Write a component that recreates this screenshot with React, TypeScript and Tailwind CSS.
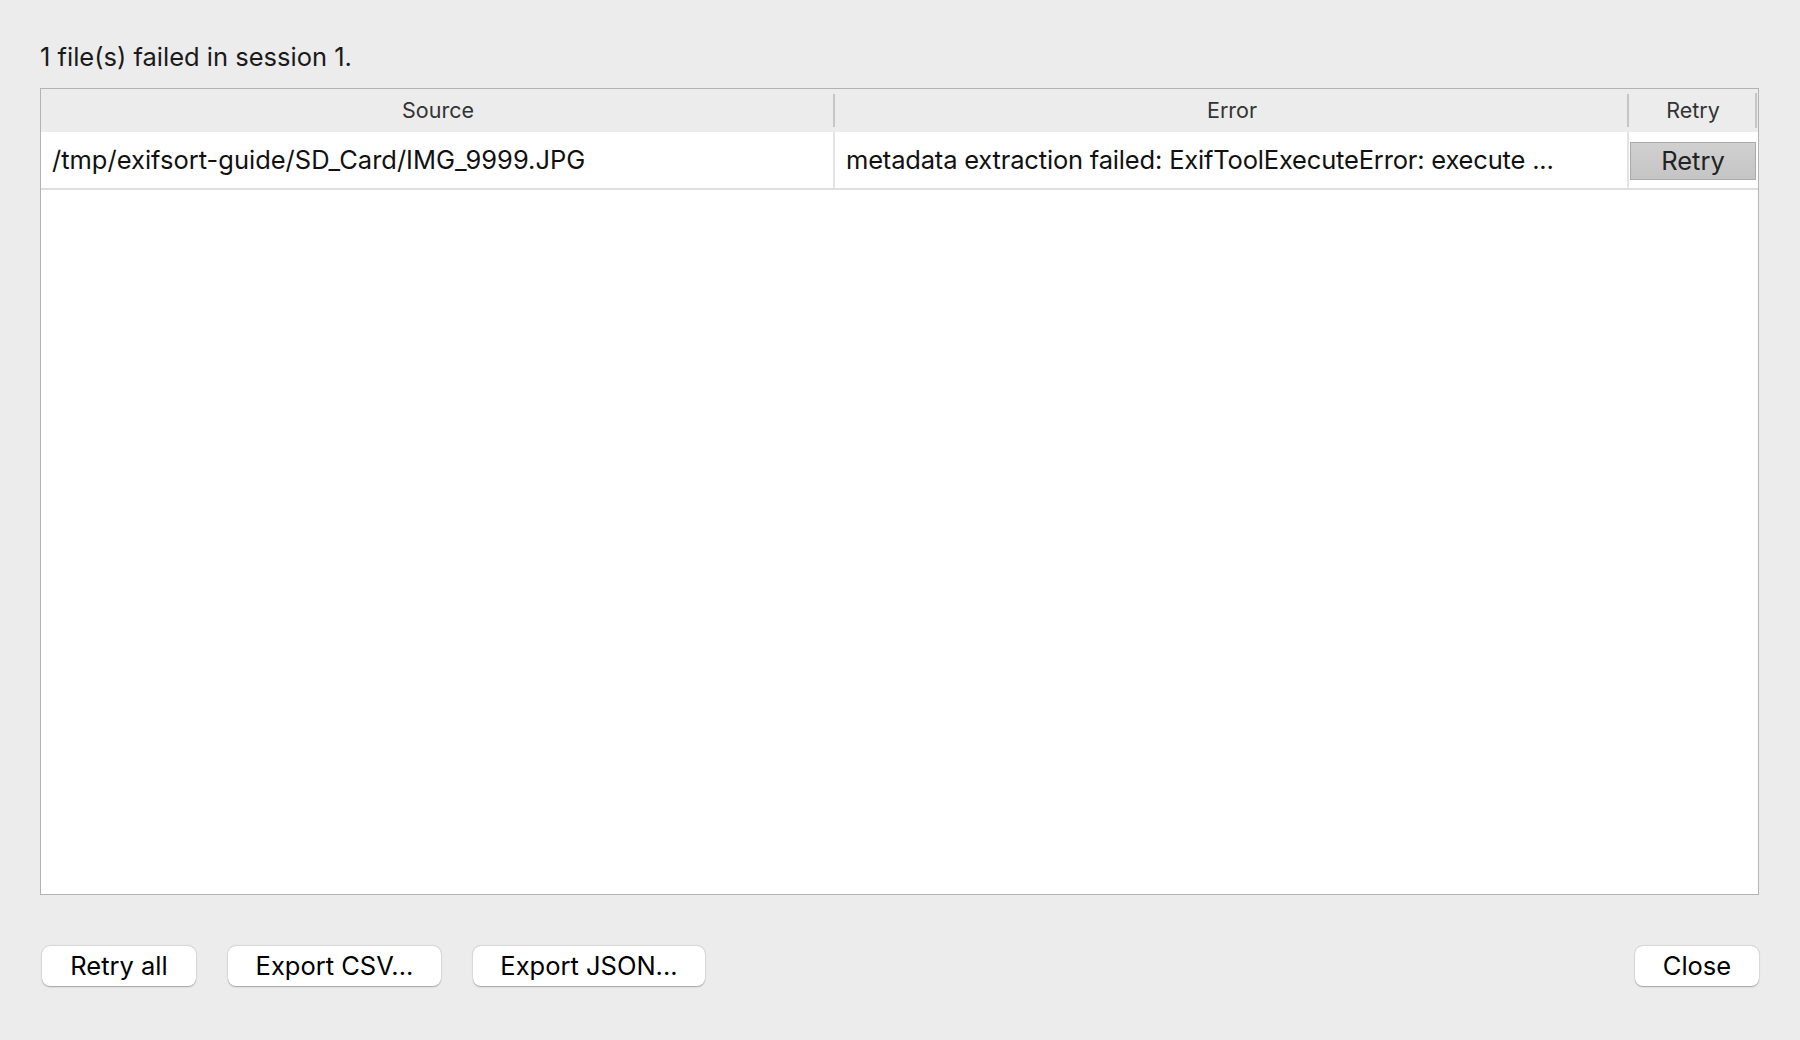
import React from "react";

const font = { fontFamily: "Inter, 'Helvetica Neue', 'Liberation Sans', sans-serif" };

type Row = { source: string; error: string };

const rows: Row[] = [
  {
    source: "/tmp/exifsort-guide/SD_Card/IMG_9999.JPG",
    error: "metadata extraction failed: ExifToolExecuteError: execute ...",
  },
];

function DialogButton({ label, width }: { label: string; width: string }) {
  return (
    <button
      className={`h-[40px] ${width} rounded-[8px] bg-white text-[25.5px] text-black shadow-[0_0.5px_1.5px_rgba(0,0,0,0.3),0_0_0_0.5px_rgba(0,0,0,0.06)] flex items-center justify-center`}
    >
      {label}
    </button>
  );
}

function HeaderCell({ label, width, last }: { label: string; width: string; last?: boolean }) {
  return (
    <div className={`${width} h-full flex items-center relative`}>
      <span className="flex-1 text-center text-[21.5px] text-[#333333]">{label}</span>
      <span
        className={`absolute right-0 ${last ? "top-[4px] bottom-[4px]" : "top-[5px] bottom-[5px]"} w-[2px] bg-[#c6c6c6]`}
      />
    </div>
  );
}

export default function App() {
  return (
    <div className="w-[1800px] h-[1040px] bg-[#ececec] overflow-hidden" style={font}>
      <div className="pt-[41px] pl-[40px] pr-[41px]">
        <div className="h-[32px] flex items-center text-[25.5px] text-[#1a1a1a]">
          1 file(s) failed in session 1.
        </div>

        {/* failures table */}
        <div className="mt-[15px] h-[807px] border border-[#b3b3b3] bg-white flex flex-col">
          <div className="h-[43px] bg-[#ececec] flex">
            <HeaderCell label="Source" width="w-[794px]" />
            <HeaderCell label="Error" width="w-[794px]" />
            <HeaderCell label="Retry" width="w-[128px]" last />
          </div>
          {rows.map((r) => (
            <div key={r.source} className="h-[58px] flex border-b-2 border-[#dedede]">
              <div className="w-[794px] flex items-center pl-[11px] border-r-2 border-[#e3e3e3] text-[25.5px] text-[#111111] whitespace-nowrap overflow-hidden">
                {r.source}
              </div>
              <div className="w-[794px] flex items-center pl-[11px] border-r-2 border-[#e3e3e3] text-[25.5px] tracking-[-0.18px] text-[#111111] whitespace-nowrap overflow-hidden">
                {r.error}
              </div>
              <div className="w-[128px] flex items-center pl-[1px] pr-[1px]">
                <button className="w-full h-[38px] mt-[2px] border border-[#a9a9a9] bg-gradient-to-b from-[#d0d0d0] to-[#c5c5c5] text-[25.5px] text-[#222222] flex items-center justify-center">
                  Retry
                </button>
              </div>
            </div>
          ))}
        </div>

        <div className="mt-[51px] flex items-center pl-[2px]">
          <div className="flex gap-[32px]">
            <DialogButton label="Retry all" width="w-[154px]" />
            <DialogButton label="Export CSV..." width="w-[213px]" />
            <DialogButton label="Export JSON..." width="w-[232px]" />
          </div>
          <div className="flex-1" />
          <DialogButton label="Close" width="w-[124px]" />
        </div>
      </div>
    </div>
  );
}
